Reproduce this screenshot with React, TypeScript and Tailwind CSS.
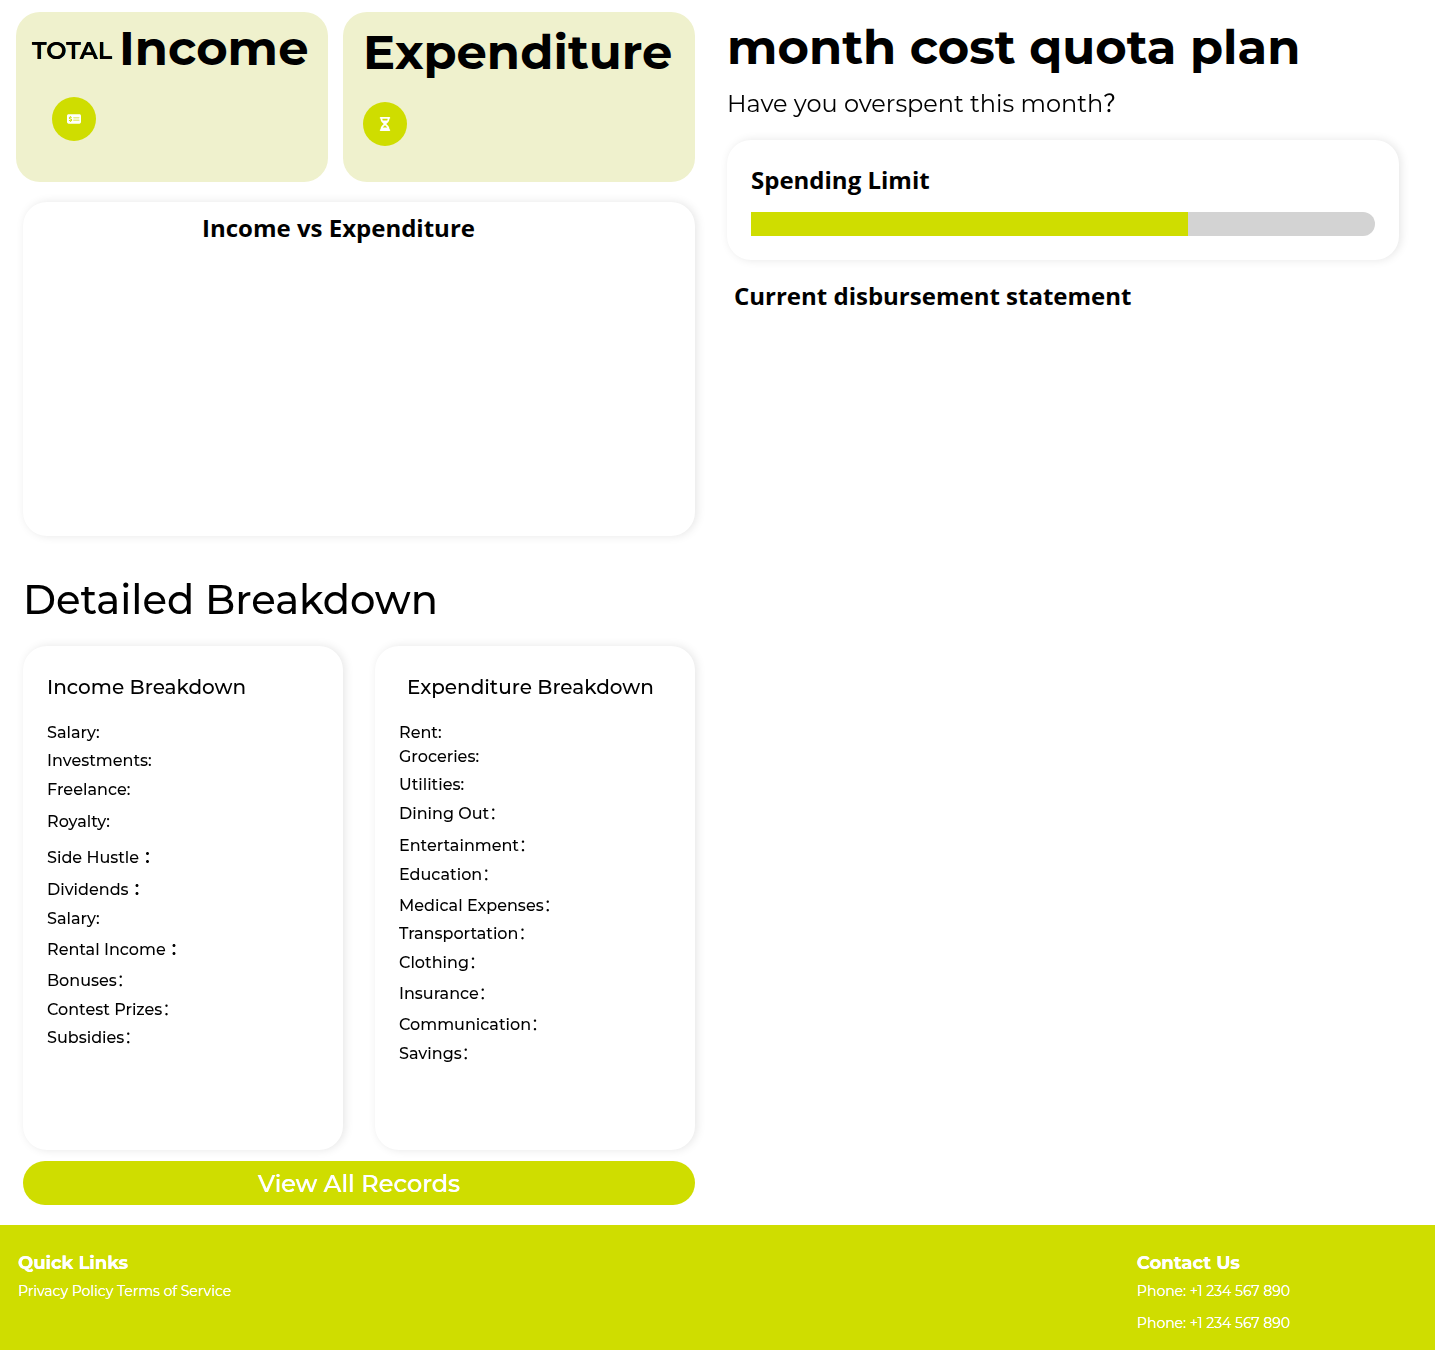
import { FaHourglassHalf, FaMoneyCheckDollar } from "react-icons/fa6";

type Row = { label: string; gap: string; colon?: "light" | "bold" };

const incomeRows: Row[] = [
  { label: "Salary:", gap: "mt-0" },
  { label: "Investments:", gap: "mt-1" },
  { label: "Freelance:", gap: "mt-[5px]" },
  { label: "Royalty:", gap: "mt-2" },
  { label: "Side Hustle ", gap: "mt-3", colon: "bold" },
  { label: "Dividends ", gap: "mt-2", colon: "bold" },
  { label: "Salary:", gap: "mt-[5px]" },
  { label: "Rental Income ", gap: "mt-[7px]", colon: "bold" },
  { label: "Bonuses", gap: "mt-[7px]", colon: "light" },
  { label: "Contest Prizes", gap: "mt-[5px]", colon: "light" },
  { label: "Subsidies", gap: "mt-1", colon: "light" },
];

const expenditureRows: Row[] = [
  { label: "Rent:", gap: "mt-0" },
  { label: "Groceries:", gap: "mt-0" },
  { label: "Utilities:", gap: "mt-1" },
  { label: "Dining Out", gap: "mt-[5px]", colon: "light" },
  { label: "Entertainment", gap: "mt-2", colon: "light" },
  { label: "Education", gap: "mt-[5px]", colon: "light" },
  { label: "Medical Expenses", gap: "mt-[7px]", colon: "light" },
  { label: "Transportation", gap: "mt-1", colon: "light" },
  { label: "Clothing", gap: "mt-[5px]", colon: "light" },
  { label: "Insurance", gap: "mt-[7px]", colon: "light" },
  { label: "Communication", gap: "mt-[7px]", colon: "light" },
  { label: "Savings", gap: "mt-[5px]", colon: "light" },
];

function Breakdown({ title, titleClass, rows }: { title: string; titleClass: string; rows: Row[] }) {
  return (
    <section className="h-[504px] w-80 rounded-3xl bg-white px-6 pt-[26px] shadow-[2px_0_10px_rgba(0,0,0,0.1)]">
      <h3 className={`bg-black bg-clip-text text-xl leading-[30px] font-medium text-transparent ${titleClass}`}>{title}</h3>
      <ul className="mt-[19px]">
        {rows.map((row, i) => (
          <li
            key={i}
            className={`h-6 bg-black bg-clip-text leading-6 font-medium whitespace-pre text-transparent ${row.gap}`}
          >
            {row.label}
            {row.colon && <span className={row.colon === "light" ? "font-normal" : "font-bold"}>：</span>}
          </li>
        ))}
      </ul>
    </section>
  );
}

export default function App() {
  return (
    <div className="flex h-[1350px] w-[1435px] flex-col bg-white font-['Montserrat','Noto_Sans_CJK_SC',sans-serif] text-base text-black">
      <div className="flex h-[1225px]">
        <main className="w-[695px] pt-3">
          <div className="flex gap-[15px] pl-4">
            <section className="h-[170px] w-[312px] rounded-3xl bg-[#eff1cd]">
              <div className="flex h-[72px] items-start pt-[6px] pl-4">
                <span className="mt-[15px] w-[87px] bg-black bg-clip-text text-2xl leading-9 font-semibold">TOTAL</span>
                <h2 className="text-5xl leading-[60px] font-bold">Income</h2>
              </div>
              <div className="mt-[13px] ml-9 flex size-11 items-center justify-center rounded-full bg-[#cfdd00] text-white">
                <FaMoneyCheckDollar className="size-[14px]" />
              </div>
            </section>
            <section className="h-[170px] w-[352px] rounded-3xl bg-[#eff1cd] px-5">
              <h2 className="pt-[10px] text-5xl leading-[60px] font-bold">Expenditure</h2>
              <div className="mt-5 flex size-11 items-center justify-center rounded-full bg-[#cfdd00] text-white">
                <FaHourglassHalf className="size-[14px]" />
              </div>
            </section>
          </div>
          <div className="pl-[23px]">
            <section className="mt-5 h-[334px] rounded-3xl bg-white pt-2 pl-[179px] shadow-[2px_0_10px_rgba(0,0,0,0.1)]">
              <h2 className="font-['Open_Sans'] text-2xl leading-9 font-bold">Income vs Expenditure</h2>
            </section>
            <h1 className="mt-[34px] bg-black bg-clip-text text-[40px] leading-[60px] font-medium text-transparent">
              Detailed Breakdown
            </h1>
            <div className="mt-4 flex gap-8">
              <Breakdown title="Income Breakdown" titleClass="" rows={incomeRows} />
              <Breakdown title="Expenditure Breakdown" titleClass="pl-2" rows={expenditureRows} />
            </div>
            <button className="mt-[11px] flex h-11 w-full justify-center rounded-[22px] bg-[#cfdd00] pt-[5px] text-2xl font-medium">
              <span className="bg-white bg-clip-text leading-9 text-white">View All Records</span>
            </button>
          </div>
        </main>
        <aside className="ml-8 w-[672px] pt-[17px]">
          <h1 className="text-5xl leading-[60px] font-bold whitespace-nowrap">month cost quota plan</h1>
          <p className="mt-[9px] bg-black bg-clip-text text-2xl leading-9 whitespace-nowrap text-transparent">
            Have you overspent this month？
          </p>
          <section className="mt-[18px] h-[120px] rounded-3xl bg-white px-6 pt-[22px] shadow-[2px_0_10px_rgba(0,0,0,0.1)]">
            <h2 className="font-['Open_Sans'] text-2xl leading-9 font-bold">Spending Limit</h2>
            <div className="mt-[14px] h-6 overflow-hidden rounded-r-xl bg-[#d3d3d3]">
              <div className="h-full w-[70%] bg-[#cfdd00]" />
            </div>
          </section>
          <h2 className="mt-[18px] pl-[7px] font-['Open_Sans'] text-2xl leading-9 font-bold">
            Current disbursement statement
          </h2>
        </aside>
      </div>
      <footer className="flex h-[125px] justify-between bg-[#cfdd00] pt-[29px] pr-[145px] pl-[18px] text-sm text-white">
        <div>
          <h4 className="bg-white bg-clip-text text-lg leading-[18px] font-bold">Quick Links</h4>
          <p className="mt-3 bg-white bg-clip-text leading-[14px]">Privacy Policy Terms of Service</p>
        </div>
        <div>
          <h4 className="bg-white bg-clip-text text-lg leading-[18px] font-bold">Contact Us</h4>
          <p className="mt-3 bg-white bg-clip-text leading-[14px]">Phone: +1 234 567 890</p>
          <p className="mt-[18px] bg-white bg-clip-text leading-[14px]">Phone: +1 234 567 890</p>
        </div>
      </footer>
    </div>
  );
}
